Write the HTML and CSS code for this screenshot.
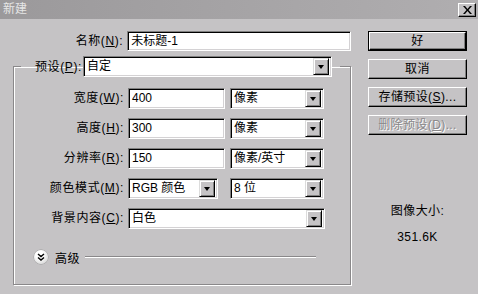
FILE: index.html
```html
<!DOCTYPE html>
<html lang="zh">
<head>
<meta charset="utf-8">
<title>新建</title>
<link rel="stylesheet" href="styles.css">
</head>
<body>
<div class="dialog">
  <div class="titlebar">
    <span class="title">新建</span>
    <span class="close"><svg width="9" height="8" viewBox="0 0 9 8"><path d="M0 0h2l2.5 3 2.5-3h2l-3.5 4 3.5 4h-2l-2.5-3-2.5 3h-2l3.5-4z" fill="#000"/></svg></span>
  </div>
  <div class="main">
    <div class="left">
      <div class="name-row">
        <span class="lbl name-lbl">名称(<u>N</u>):</span>
        <div class="field name-field">未标题-1</div>
      </div>
      <fieldset class="group">
        <legend class="preset">
          <span class="lbl">预设(<u>P</u>):</span>
          <div class="field combo preset-combo"><span class="val">自定</span><span class="drop"><i></i></span></div>
        </legend>
        <div class="grid">
          <span class="lbl">宽度(<u>W</u>):</span>
          <div class="field">400</div>
          <div class="field combo"><span class="val">像素</span><span class="drop"><i></i></span></div>

          <span class="lbl">高度(<u>H</u>):</span>
          <div class="field">300</div>
          <div class="field combo"><span class="val">像素</span><span class="drop"><i></i></span></div>

          <span class="lbl">分辨率(<u>R</u>):</span>
          <div class="field">150</div>
          <div class="field combo"><span class="val">像素/英寸</span><span class="drop"><i></i></span></div>

          <span class="lbl">颜色模式(<u>M</u>):</span>
          <div class="field combo mode-combo"><span class="val">RGB 颜色</span><span class="drop"><i></i></span></div>
          <div class="field combo"><span class="val">8 位</span><span class="drop"><i></i></span></div>

          <span class="lbl">背景内容(<u>C</u>):</span>
          <div class="field combo wide"><span class="val">白色</span><span class="drop"><i></i></span></div>
        </div>
        <div class="advanced">
          <span class="adv-icon"><svg width="8" height="8" viewBox="0 0 8 8"><path d="M1 1l3 2.5 3-2.5M1 4.5l3 2.5 3-2.5" fill="none" stroke="#000" stroke-width="1.4"/></svg></span>
          <span class="adv-text">高级</span>
          <span class="adv-line"></span>
        </div>
      </fieldset>
    </div>
    <div class="right">
      <div class="default-frame"><div class="btn">好</div></div>
      <div class="btn">取消</div>
      <div class="btn">存储预设(<u>S</u>)...</div>
      <div class="btn disabled">删除预设(<u>D</u>)...</div>
      <div class="info">
        <div>图像大小:</div>
        <div class="size">351.6K</div>
      </div>
    </div>
  </div>
</div>
</body>
</html>
```
FILE: styles.css
```css
* { box-sizing: border-box; }
html, body { margin: 0; padding: 0; }
body {
  width: 478px;
  height: 294px;
  overflow: hidden;
  background: #c5c3c5;
  font-family: "Liberation Sans", "Noto Sans CJK SC", sans-serif;
  font-size: 12px;
  color: #000;
}
u { text-decoration: underline; text-underline-offset: 1px; }
.dialog { width: 478px; height: 294px; display: flex; flex-direction: column; }
.titlebar {
  height: 19px;
  background: linear-gradient(to right, #9b999b, #b0aeb0);
  display: flex;
  align-items: center;
  justify-content: space-between;
  padding: 0 2px 0 3px;
}
.title { color: #e6e6e6; font-size: 12px; line-height: 19px; }
.close {
  width: 18px;
  height: 14px;
  background: #c5c3c5;
  border: 1px solid;
  border-color: #fff #000 #000 #fff;
  box-shadow: inset -1px -1px 0 #808080;
  display: flex;
  align-items: center;
  justify-content: center;
  margin-top: 1px;
}
.main { display: flex; padding-top: 12px; }
.left { width: 351px; }
.lbl { text-align: right; white-space: nowrap; line-height: 20px; letter-spacing: 0.6px; }
.field {
  background: #fff;
  height: 21px;
  border: 1px solid;
  border-color: #808080 #fff #fff #808080;
  box-shadow: inset 1px 1px 0 #000, inset -1px -1px 0 #d4d2d4;
  padding: 0 3px;
  line-height: 19px;
  white-space: nowrap;
}
.name-row { display: flex; gap: 4px; align-items: center; }
.name-lbl { width: 124px; }
.name-field { width: 225px; height: 20px; line-height: 18px; }
.group {
  margin: 5px 0 0 13px;
  width: 338px;
  height: 229px;
  padding: 0 0 0 0;
  border: 1px solid #8a888a;
  box-shadow: inset 1px 1px 0 #fff, 1px 1px 0 #fff;
  min-width: 0;
}
.preset {
  margin-left: 7px;
  padding: 0 8px 0 14px;
  display: flex;
  align-items: center;
  gap: 1px;
}
.preset-combo { width: 249px; }
.combo { display: flex; align-items: center; justify-content: space-between; padding: 0 2px 0 3px; }
.drop {
  width: 16px;
  height: 17px;
  background: #c5c3c5;
  border: 1px solid;
  border-color: #dcdcdc #000 #000 #dcdcdc;
  box-shadow: inset 1px 1px 0 #fff, inset -1px -1px 0 #808080;
  display: flex;
  align-items: center;
  justify-content: center;
}
.drop i {
  width: 0; height: 0;
  border-left: 3.5px solid transparent;
  border-right: 3.5px solid transparent;
  border-top: 4px solid #000;
  margin-top: 1px;
}
.grid {
  display: grid;
  grid-template-columns: 110px 97px 95px;
  column-gap: 4px 5px;
  column-gap: 4px;
  row-gap: 9px;
  margin-top: 11px;
}
.grid > :nth-child(3n) { margin-left: 1px; }
.mode-combo { width: 90px; }
.wide { grid-column: 2 / 4; width: 197px; }
.advanced {
  display: flex;
  align-items: center;
  margin: 20px 0 0 20px;
  height: 16px;
}
.adv-icon {
  width: 14px;
  height: 14px;
  border-radius: 50%;
  background: radial-gradient(circle at 40% 35%, #ffffff 30%, #d8d8d8 80%, #a8a8a8 100%);
  box-shadow: 0 0 0 0.5px #9a9a9a;
  display: flex;
  align-items: center;
  justify-content: center;
}
.adv-text { margin-left: 7px; letter-spacing: 0.6px; }
.adv-line {
  margin-left: 5px;
  width: 231px;
  height: 2px;
  border-top: 1px solid #8a888a;
  border-bottom: 1px solid #fff;
}
.right { margin-left: 17px; width: 99px; display: flex; flex-direction: column; gap: 8px; }
.btn {
  height: 20px;
  background: #c5c3c5;
  border: 1px solid;
  border-color: #fff #000 #000 #fff;
  box-shadow: inset -1px -1px 0 #808080;
  text-align: center;
  line-height: 18px;
  white-space: nowrap;
  letter-spacing: 0.4px;
}
.default-frame { border: 1px solid #000; height: 20px; }
.default-frame .btn { height: 18px; line-height: 16px; }
.disabled { color: #8a888a; text-shadow: 1px 1px 0 #fff; }
.info { text-align: center; margin-top: 61px; line-height: 14px; letter-spacing: 0.4px; }
.size { margin-top: 12px; }
```
